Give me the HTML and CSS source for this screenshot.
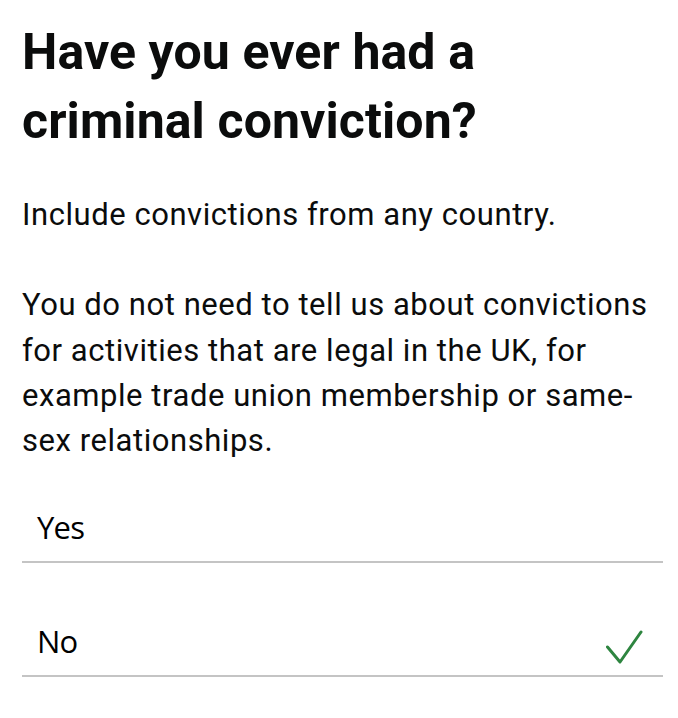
FILE: index.html
```html
<!DOCTYPE html>
<html lang="en">
<head>
<meta charset="utf-8">
<link rel="stylesheet" href="styles.css">
</head>
<body>
<main class="page">
  <h1 class="title">Have you ever had a criminal conviction?</h1>
  <p class="hint">Include convictions from any country.</p>
  <p class="hint">You do not need to tell us about convictions for activities that are legal in the UK, for example trade union membership or same-sex relationships.</p>
  <ul class="options">
    <li class="option"><span class="label">Yes</span></li>
    <li class="option"><span class="label">No</span>
      <svg class="check" width="38" height="36" viewBox="0 0 38 36"><path d="M2.5 18 L15 33 L36 3" fill="none" stroke="#2e8540" stroke-width="3" stroke-linecap="round" stroke-linejoin="round"/></svg>
    </li>
  </ul>
</main>
</body>
</html>
```
FILE: styles.css
```css
html, body { margin: 0; padding: 0; background: #fff; }
.page {
  padding: 18px 15px 0 22px;
  font-family: Roboto, "Liberation Sans", Arial, sans-serif;
  color: #0b0c0c;
}
.title {
  margin: 0;
  font-size: 50px;
  line-height: 69px;
  font-weight: 700;
  letter-spacing: 0.1px;
  width: 560px;
}
.hint {
  margin: 0;
  font-size: 31px;
  line-height: 45.3px;
  letter-spacing: 0.55px;
}
.title + .hint { margin-top: 36px; }
.hint + .hint { margin-top: 45px; }
.options {
  list-style: none;
  margin: -14px 0 0;
  padding: 0;
}
.option {
  display: flex;
  align-items: flex-end;
  justify-content: space-between;
  height: 114px;
  border-bottom: 2px solid #c4c4c4;
  padding: 0 20px 13px 15px;
  box-sizing: border-box;
  font-family: "Open Sans", sans-serif;
  font-size: 31px;
  letter-spacing: -0.8px;
  color: #000;
}
.check { margin-bottom: -3px; }
```
